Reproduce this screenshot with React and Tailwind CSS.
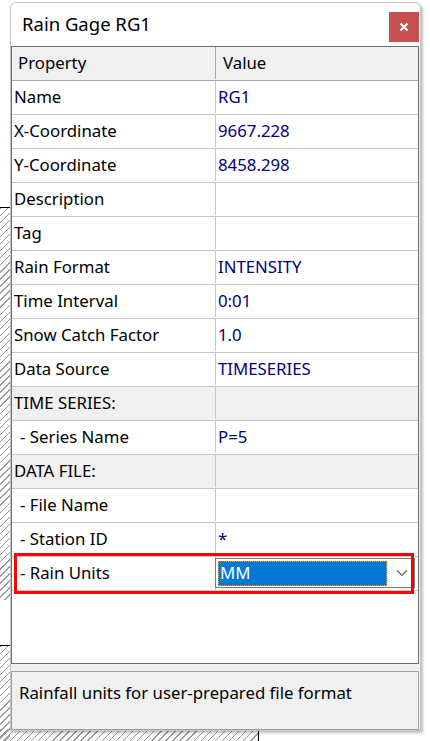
import React from 'react';

const rows = [
  { name: 'Name', value: 'RG1' },
  { name: 'X-Coordinate', value: '9667.228' },
  { name: 'Y-Coordinate', value: '8458.298' },
  { name: 'Description', value: '' },
  { name: 'Tag', value: '' },
  { name: 'Rain Format', value: 'INTENSITY' },
  { name: 'Time Interval', value: '0:01' },
  { name: 'Snow Catch Factor', value: '1.0' },
  { name: 'Data Source', value: 'TIMESERIES' },
  { name: 'TIME SERIES:', value: '', section: true },
  { name: '- Series Name', value: 'P=5', sub: true },
  { name: 'DATA FILE:', value: '', section: true },
  { name: '- File Name', value: '', sub: true },
  { name: '- Station ID', value: '*', sub: true },
];

const hatch =
  'bg-[repeating-linear-gradient(135deg,#9a9a9a_0px,#9a9a9a_1px,transparent_1px,transparent_5px)]';

const Row = ({ row }) => (
  <div className={`flex h-[34px] pb-[1px] border-b border-[#c8c8c8] ${row.section ? 'bg-[#f0f0f0]' : 'bg-white'}`}>
    <div className={`w-[204px] shrink-0 border-r border-[#c8c8c8] flex items-center ${row.sub ? 'pl-[8px]' : 'pl-[2px]'}`}>
      {row.name}
    </div>
    <div className="flex-1 flex items-center pl-[2px] text-[#000080]">{row.value}</div>
  </div>
);

export default function App() {
  return (
    <div
      className="relative w-[430px] h-[741px] bg-white overflow-hidden text-[16.8px] text-black"
      style={{ fontFamily: '"Noto Sans", "Open Sans", sans-serif' }}
    >
      {/* canvas behind the dialog */}
      <div className={`absolute left-0 top-[207px] w-[10px] h-[393px] border-t border-black ${hatch}`} />
      <div className={`absolute left-0 top-[645px] w-[10px] h-[96px] border-t border-black ${hatch}`} />
      <div className={`absolute left-0 top-[729px] w-[259px] h-[12px] border-r border-black ${hatch}`} />

      {/* dialog */}
      <div className="relative ml-[10px] mt-[2px] w-[411px] h-[729px] flex flex-col bg-[#f0f0f0] border border-[#c4c4c4] rounded-t-[6px] shadow-[2px_2px_3px_rgba(0,0,0,0.25)]">
        <div className="h-[43px] shrink-0 bg-white rounded-t-[6px] flex items-start justify-between pl-[11px]">
          <span className="mt-[8px] text-[18.5px] leading-[25px]">Rain Gage RG1</span>
          <button className="mt-[9px] mr-[1px] w-[30px] h-[30px] bg-[#c75050] flex items-center justify-center">
            <svg width="10" height="10" viewBox="0 0 10 10">
              <path d="M1.5 1.5 L8.5 8.5 M8.5 1.5 L1.5 8.5" stroke="white" strokeWidth="2.2" />
            </svg>
          </button>
        </div>

        {/* property grid */}
        <div className="mr-[1px] h-[618px] shrink-0 border border-[#6e6e6e] bg-white flex flex-col">
          <div className="flex h-[34px] shrink-0 pb-[1px] bg-[#f0f0f0] border-b border-[#a8a8a8]">
            <div className="w-[204px] shrink-0 border-r border-[#a8a8a8] flex items-center pl-[6px]">Property</div>
            <div className="flex-1 flex items-center pl-[7px]">Value</div>
          </div>
          {rows.map((r) => (
            <Row key={r.name} row={r} />
          ))}
          <div className="relative flex h-[34px] border-b border-[#c8c8c8] bg-white">
            <div className="w-[204px] shrink-0 border-r border-[#c8c8c8] flex items-center pl-[8px] pb-[1px]">- Rain Units</div>
            <div className="flex-1 relative">
              <div className="absolute left-[-1px] top-[1px] w-[200px] h-[30px] border border-[#7a7a7a] bg-white flex items-center pl-[2px] pr-[6px]">
                <div className="w-[169px] h-[25px] bg-[#0078d7] border border-dotted border-[#e8a040] text-white flex items-center pl-[1px]">
                  MM
                </div>
                <div className="flex-1" />
                <svg width="12" height="8" viewBox="0 0 12 8">
                  <path d="M1 1.5 L6 6.5 L11 1.5" stroke="#606060" strokeWidth="1.2" fill="none" />
                </svg>
              </div>
            </div>
            <div className="absolute left-[2px] right-[4px] top-[-4px] bottom-[-4px] border-[3px] border-[#ff0000] pointer-events-none" />
          </div>
          <div className="flex-1" />
        </div>

        <div className="h-[7px] shrink-0" />

        {/* description panel */}
        <div className="mr-[1px] h-[59px] shrink-0 border border-[#a0a0a0] bg-[#f0f0f0] pl-[7px] pt-[10px] leading-[22px]">
          Rainfall units for user-prepared file format
        </div>
      </div>
    </div>
  );
}
